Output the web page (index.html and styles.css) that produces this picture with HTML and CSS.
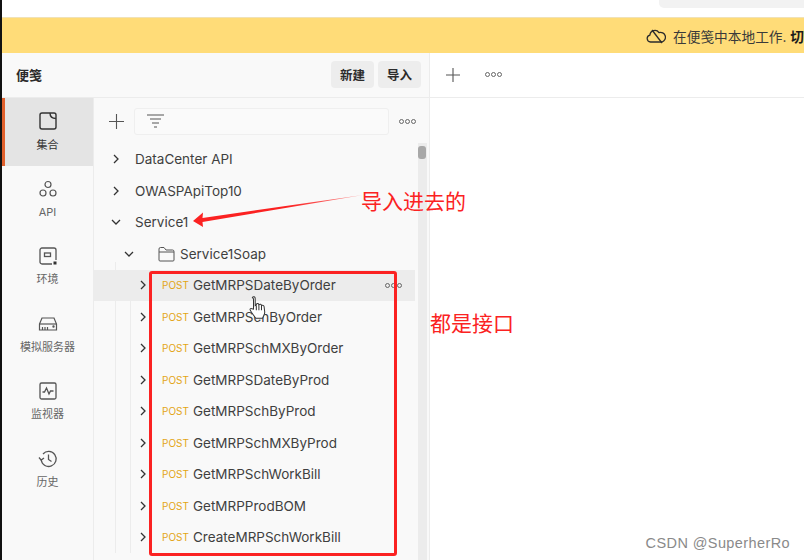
FILE: index.html
```html
<!DOCTYPE html>
<html lang="zh-CN">
<head>
  <meta charset="UTF-8">
  <title>便笺</title>
  <meta name="viewport" content="width=device-width, initial-scale=1.0" />
  <link rel="stylesheet" href="styles.css">
</head>
<body>
  <div class="top-strip"><div class="top-search"></div></div>
  <div class="banner">
    <svg class="cloud" width="20" height="16" viewBox="0 0 20 16" fill="none" stroke="#2b2b2b" stroke-width="1.3"><path d="M6 14H4.5a3.5 3.5 0 0 1-.6-6.9A5 5 0 0 1 13 4.600a4.400 4.400 0 0 1 3 9.400H6z"/><path d="M6 2l10 13"/></svg>
    <span class="banner-text">在便笺中本地工作. <b>切换</b></span>
  </div>
  <div class="main">
    <div class="left">
      <div class="left-head">
        <span class="left-title">便笺</span>
        <span class="btn first">新建</span>
        <span class="btn">导入</span>
      </div>
      <div class="left-body">
        <div class="rail">
          <div class="rail-item active">
            <svg width="20" height="20" viewBox="0 0 20 20" fill="none" stroke="#333" stroke-width="1.4"><rect x="2" y="2" width="16" height="16" rx="2"/><path d="M12 2c0 3 2 5.500 6 5.500"/></svg>
            <span>集合</span>
          </div>
          <div class="rail-item">
            <svg width="20" height="20" viewBox="0 0 20 20" fill="none" stroke="#555" stroke-width="1.2"><circle cx="10" cy="5.500" r="3"/><circle cx="5" cy="14" r="3"/><circle cx="15" cy="14" r="3"/></svg>
            <span>API</span>
          </div>
          <div class="rail-item">
            <svg width="20" height="20" viewBox="0 0 20 20" fill="none" stroke="#555" stroke-width="1.3"><path d="M14 18H4a2 2 0 0 1-2-2V4a2 2 0 0 1 2-2h12a2 2 0 0 1 2 2v10"/><rect x="6.500" y="7" width="6" height="3.500"/><rect x="15.500" y="15.500" width="3" height="3" fill="#333" stroke="none"/></svg>
            <span>环境</span>
          </div>
          <div class="rail-item">
            <svg width="20" height="20" viewBox="0 0 20 20" fill="none" stroke="#555" stroke-width="1.2"><path d="M1.500 10 4 4h12l2.500 6v6h-17z"/><path d="M1.500 10h17"/><path d="M4.500 13v3M7 13v3M9.500 13v3"/><circle cx="15.500" cy="12.500" r=".6"/></svg>
            <span>模拟服务器</span>
          </div>
          <div class="rail-item">
            <svg width="20" height="20" viewBox="0 0 20 20" fill="none" stroke="#555" stroke-width="1.3"><rect x="2" y="2" width="16" height="16" rx="1.500"/><path d="M4.500 11h2l2-4 2.500 6 1.500-3h3"/></svg>
            <span>监视器</span>
          </div>
          <div class="rail-item">
            <svg width="20" height="20" viewBox="0 0 20 20" fill="none" stroke="#555" stroke-width="1.3"><path d="M3.200 11A7.500 7.500 0 1 0 5 5"/><path d="M1 8.500l2.200 2.600 2.800-2.200"/><path d="M10.500 5.500v5l3 2"/></svg>
            <span>历史</span>
          </div>
        </div>
        <div class="tree">
          <div class="tree-tools">
            <svg class="plus" width="15" height="15" viewBox="0 0 15 15" stroke="#555" stroke-width="1.1"><path d="M7.500 0v15M0 7.500h15"/></svg>
            <div class="filter">
              <svg width="17" height="14" viewBox="0 0 17 14" stroke="#555" stroke-width="1.1"><path d="M0 1h17M3 5h11M5 9h7M7 13h3"/></svg>
            </div>
            <span class="dots"><i></i><i></i><i></i></span>
          </div>
          <div class="rows">
            <div class="row"><svg class="chev" viewBox="0 0 10 10"><path d="M3 1l4 4-4 4"/></svg><span class="name">DataCenter API</span></div>
            <div class="row"><svg class="chev" viewBox="0 0 10 10"><path d="M3 1l4 4-4 4"/></svg><span class="name">OWASPApiTop10</span></div>
            <div class="row"><svg class="chev" viewBox="0 0 10 10"><path d="M1 3l4 4 4-4"/></svg><span class="name">Service1</span></div>
            <div class="row folder-row"><svg class="chev" viewBox="0 0 10 10"><path d="M1 3l4 4 4-4"/></svg>
              <svg class="folder" width="17" height="16" viewBox="0 0 17 16" fill="none" stroke="#555" stroke-width="1"><path d="M1 14V3a1.500 1.500 0 0 1 1.500-1.500h3.500l2 2.500h6.500A1.500 1.500 0 0 1 16 5.500V14a1 1 0 0 1-1 1H2a1 1 0 0 1-1-1z"/><path d="M1 6h15"/></svg>
              <span class="name">Service1Soap</span></div>
            <div class="row req hover"><svg class="chev" viewBox="0 0 10 10"><path d="M3 1l4 4-4 4"/></svg><span class="post">POST</span><span class="name">GetMRPSDateByOrder</span><span class="dots"><i></i><i></i><i></i></span></div>
            <div class="row req"><svg class="chev" viewBox="0 0 10 10"><path d="M3 1l4 4-4 4"/></svg><span class="post">POST</span><span class="name">GetMRPSchByOrder</span></div>
            <div class="row req"><svg class="chev" viewBox="0 0 10 10"><path d="M3 1l4 4-4 4"/></svg><span class="post">POST</span><span class="name">GetMRPSchMXByOrder</span></div>
            <div class="row req"><svg class="chev" viewBox="0 0 10 10"><path d="M3 1l4 4-4 4"/></svg><span class="post">POST</span><span class="name">GetMRPSDateByProd</span></div>
            <div class="row req"><svg class="chev" viewBox="0 0 10 10"><path d="M3 1l4 4-4 4"/></svg><span class="post">POST</span><span class="name">GetMRPSchByProd</span></div>
            <div class="row req"><svg class="chev" viewBox="0 0 10 10"><path d="M3 1l4 4-4 4"/></svg><span class="post">POST</span><span class="name">GetMRPSchMXByProd</span></div>
            <div class="row req"><svg class="chev" viewBox="0 0 10 10"><path d="M3 1l4 4-4 4"/></svg><span class="post">POST</span><span class="name">GetMRPSchWorkBill</span></div>
            <div class="row req"><svg class="chev" viewBox="0 0 10 10"><path d="M3 1l4 4-4 4"/></svg><span class="post">POST</span><span class="name">GetMRPProdBOM</span></div>
            <div class="row req"><svg class="chev" viewBox="0 0 10 10"><path d="M3 1l4 4-4 4"/></svg><span class="post">POST</span><span class="name">CreateMRPSchWorkBill</span></div>
          </div>
          <div class="scrollbar"><div class="thumb"></div></div>
        </div>
      </div>
    </div>
    <div class="right">
      <div class="right-head">
        <svg width="14" height="14" viewBox="0 0 14 14" stroke="#555" stroke-width="1.1"><path d="M7 0v14M0 7h14"/></svg>
        <span class="dots"><i></i><i></i><i></i></span>
      </div>
    </div>
  </div>

  <!-- annotations drawn over the app -->
  <svg class="arrow" width="172" height="40" viewBox="0 0 172 40"><defs><linearGradient id="fade"><stop offset=".55" stop-color="#fb2222"/><stop offset="1" stop-color="#fb8a8a"/></linearGradient></defs><path d="M0 27 L10 18.500 L9.500 24 L170 1 L9.500 28 L10 33 Z" fill="url(#fade)"/></svg>
  <div class="red-box"></div>
  <span class="note note-a">导入进去的</span>
  <span class="note note-b">都是接口</span>
  <svg class="cursor" width="18" height="26" viewBox="0 0 16 22" fill="#fff" stroke="#333" stroke-width=".9"><path d="M3 1.500c1-1 2.500-.5 2.500 1V9l1-.5V7.500c1-.8 2-.5 2.300.5 1-.6 2-.3 2.300.7 1-.4 2 0 2.300 1l.6 5c0 2-1 3-2 5.500H6c-1-2-4-5-5-7.500-.3-1 .8-1.700 1.700-1L4 12V3z"/><path d="M6.500 9v4M8.800 8v5M11.100 8.700V13" fill="none"/></svg>
  <span class="mark">CSDN @SuperherRo</span>
</body>
</html>
```

FILE: styles.css
```css
* { box-sizing: border-box; }
html, body { height: 100%; }
body { margin: 0; width: 804px; height: 560px; overflow: hidden; position: relative; background: #fff; color: #3a3a3a; border-left: 2px solid #111; font-family: Inter, "Noto Sans CJK SC", sans-serif; font-size: 13px; }

.top-strip { height: 17px; background: #fff; position: relative; }
.top-search { position: absolute; left: 657px; top: 0; width: 145px; height: 8px; background: #f2f2f2; border-radius: 0 0 0 5px; }

.banner { height: 36px; background: #ffdc78; border-top: 1px solid #f0e2b8; display: flex; align-items: center; padding-left: 644px; white-space: nowrap; overflow: hidden; color: #3a3a3a; }
.cloud { flex: none; margin-right: 7px; }
.banner-text { font-size: 13.700px; }
.banner-text b { color: #1c1c1c; }

.main { display: flex; height: 507px; }
.left { width: 428px; background: #f9f9f9; border-right: 1px solid #ececec; flex: none; }
.left-head { height: 45px; display: flex; align-items: center; padding: 0 8px 2px 14px; border-bottom: 1px solid #ececec; }
.left-title { font-size: 13px; font-weight: 700; color: #2b2b2b; margin-right: auto; }
.btn { height: 27px; width: 43px; background: #ededed; border-radius: 4px; display: flex; align-items: center; justify-content: center; font-size: 12.500px; font-weight: 700; color: #2b2b2b; }
.btn.first { margin-right: 4px; }

.left-body { display: flex; height: 462px; }
.rail { width: 92px; flex: none; border-right: 1px solid #ececec; }
.rail-item { height: 67.500px; display: flex; flex-direction: column; align-items: center; padding-top: 13px; gap: 6px; color: #666; font-size: 11px; }
.rail-item span { line-height: 15px; }
.rail-item.active { background: #e4e4e4; border-left: 3px solid #e0602c; padding-right: 3px; gap: 7px; color: #333; }

.tree { flex: 1; position: relative; min-width: 0; }
.tree-tools { height: 45.500px; display: flex; align-items: center; padding-left: 15px; padding-top: 1px; }
.plus { flex: none; }
.filter { width: 255px; height: 27px; margin-left: 10px; background: #fafafa; border: 1px solid #efefef; border-radius: 3px; display: flex; align-items: center; padding-left: 12px; }
.dots { display: inline-flex; gap: 1px; }
.dots i { width: 5px; height: 5px; border: 1px solid #666; border-radius: 50%; display: block; }
.tree-tools .dots { margin-left: 10px; }

.rows { width: 321px; height: 416.500px; overflow: hidden; position: relative; }
.row { height: 31.500px; display: flex; align-items: center; padding-left: 17px; font-size: 13.500px; white-space: nowrap; }
.chev { width: 10px; height: 10px; flex: none; fill: none; stroke: #333; stroke-width: 1.300; }
.row .name { margin-left: 14px; color: #3f3f3f; }
.folder-row { padding-left: 30px; position: relative; }
.folder-row::before { content: ""; position: absolute; left: 21px; top: 24px; bottom: 0; width: 1px; background: #ececec; }
.folder-row .folder { margin-left: 24px; flex: none; }
.folder-row .name { margin-left: 5px; }
.req { padding-left: 44px; position: relative; }
.req::before, .req::after { content: ""; position: absolute; top: 0; bottom: 0; width: 1px; background: #ececec; }
.req::before { left: 21px; }
.req::after { left: 36px; }
.req .post { margin-left: 14px; width: 31px; font-size: 10px; letter-spacing: 0; color: #e3a516; }
.req .name { margin-left: 0; }
.req.hover { background: #ececec; }
.req .dots { position: absolute; right: 13px; top: 13px; }

.scrollbar { position: absolute; left: 324px; top: 0; bottom: 0; width: 9px; background: #ececec; margin-top: 45px; }
.thumb { width: 8px; height: 13px; margin-top: 3px; background: #a8a8a8; border-radius: 3px; }

.right { flex: 1; }
.right-head { height: 45px; border-bottom: 1px solid #ececec; display: flex; align-items: center; padding-left: 16px; padding-bottom: 1px; gap: 25px; }

.arrow { position: absolute; left: 191px; top: 194px; }
.red-box { position: absolute; left: 147px; top: 271px; width: 248px; height: 285px; border: 3px solid #fb2222; border-radius: 3px; }
.note { position: absolute; color: #fb2222; font-size: 21px; line-height: 26px; white-space: nowrap; font-family: "Noto Sans CJK SC", sans-serif; }
.note-a { left: 359px; top: 187px; }
.note-b { left: 428px; top: 309px; }
.cursor { position: absolute; left: 247px; top: 295px; }
.mark { position: absolute; right: 14px; top: 535px; color: #8a8a8a; font-size: 14.500px; font-family: "Liberation Sans", sans-serif; text-shadow: 0 0 2px #fff; letter-spacing: .4px; }
```
